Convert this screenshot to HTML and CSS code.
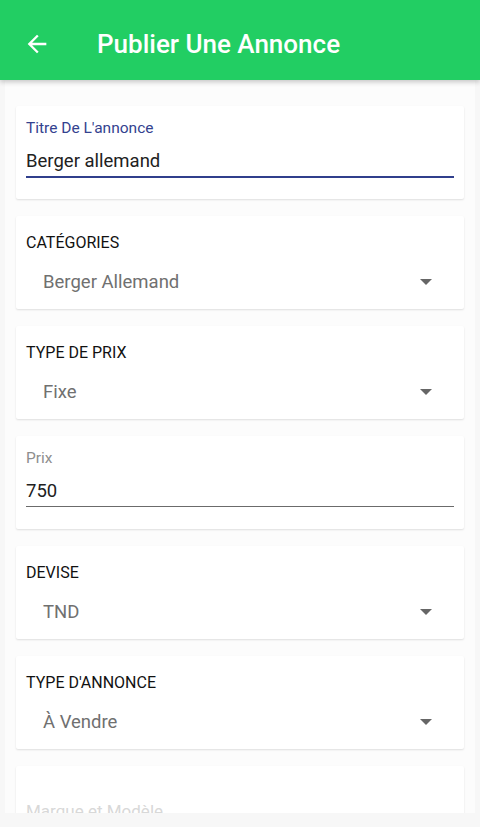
FILE: index.html
```html
<!DOCTYPE html>
<html lang="fr">
<head>
    <meta charset="UTF-8">
    <meta name="viewport" content="width=device-width, initial-scale=1.0">
    <title>Publier Une Annonce</title>
    <link rel="stylesheet" href="styles.css">
</head>
<body>
    <header class="toolbar">
        <svg class="back" width="28" height="28" viewBox="0 0 24 24">
            <path d="M20 11H7.83l5.59-5.59L12 4l-8 8 8 8 1.41-1.41L7.83 13H20v-2z" fill="#fff"/>
        </svg>
        <h1>Publier Une Annonce</h1>
    </header>

    <main class="form">
        <div class="card field">
            <label class="float focused">Titre De L'annonce</label>
            <div class="input active">Berger allemand</div>
        </div>

        <div class="card select">
            <div class="caption">CATÉGORIES</div>
            <div class="value">Berger Allemand <span class="caret"></span></div>
        </div>

        <div class="card select">
            <div class="caption">TYPE DE PRIX</div>
            <div class="value">Fixe <span class="caret"></span></div>
        </div>

        <div class="card field">
            <label class="float">Prix</label>
            <div class="input">750</div>
        </div>

        <div class="card select">
            <div class="caption">DEVISE</div>
            <div class="value">TND <span class="caret"></span></div>
        </div>

        <div class="card select">
            <div class="caption">TYPE D'ANNONCE</div>
            <div class="value">À Vendre <span class="caret"></span></div>
        </div>

        <div class="card field last">
            <label class="float faded">Marque et Modèle</label>
        </div>
    </main>

    <div class="navbar"></div>
</body>
</html>
```

FILE: styles.css
```css
body {
    font-family: Roboto, "Noto Sans", sans-serif;
    margin: 0;
    background-color: #f7f7f7;
    height: 827px;
    overflow: hidden;
}
.toolbar {
    display: flex;
    align-items: center;
    height: 80px;
    background-color: #22ce63;
    box-shadow: 0 2px 5px rgba(0, 0, 0, 0.22);
    position: relative;
    z-index: 2;
}
.back {
    margin-left: 23px;
    margin-top: 8px;
}
.toolbar h1 {
    margin: 8px 0 0 46px;
    color: #fff;
    font-size: 26px;
    font-weight: 500;
}
.form {
    display: flex;
    flex-direction: column;
    gap: 17px;
    margin: 0 5px;
    padding: 26px 11px 0;
    background-color: #fcfcfc;
}
.card {
    background: #fff;
    border-radius: 2px;
    box-shadow: 0 1px 2px rgba(0, 0, 0, 0.12);
    padding: 0 10px;
    height: 93px;
    box-sizing: border-box;
}
.field {
    padding-top: 13px;
}
.float {
    display: block;
    font-size: 15.5px;
    line-height: 18px;
    color: #8e8e8e;
}
.float.focused {
    color: #34428f;
}
.input {
    margin-top: 12px;
    font-size: 18.5px;
    line-height: 24px;
    color: #212121;
    padding-bottom: 3px;
    border-bottom: 1px solid #6b6b6b;
}
.input.active {
    border-bottom: 2px solid #303f8c;
}
.select {
    padding-top: 17px;
}
.caption {
    font-size: 16px;
    line-height: 20px;
    color: #111;
}
.value {
    display: flex;
    align-items: center;
    justify-content: space-between;
    margin-top: 18px;
    padding: 0 22px 0 17px;
    font-size: 18.5px;
    line-height: 22px;
    color: #707070;
}
.caret {
    width: 0;
    height: 0;
    border-left: 6px solid transparent;
    border-right: 6px solid transparent;
    border-top: 6px solid #666;
}
.last {
    height: 60px;
    padding-top: 36px;
}
.faded {
    color: #d8d8d8;
    font-size: 17px;
}
.navbar {
    position: fixed;
    left: 0;
    right: 0;
    bottom: 0;
    height: 14px;
    background-color: #f7f7f7;
    z-index: 3;
}
```
